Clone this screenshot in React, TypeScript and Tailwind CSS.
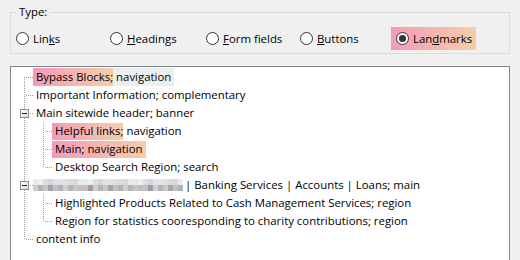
type Cell = 'first' | 'tee' | 'last' | 'pipe' | 'expand'

const line = '#a0a0a0'

function Gutter({ kind }: { kind: Cell }) {
  return (
    <svg width="19" height="18" className="shrink-0" shapeRendering="crispEdges">
      {kind === 'pipe' && <line x1="10.5" y1="0" x2="10.5" y2="18" stroke={line} strokeDasharray="1 1" />}
      {kind === 'tee' && <line x1="10.5" y1="0" x2="10.5" y2="18" stroke={line} strokeDasharray="1 1" />}
      {kind === 'last' && <line x1="10.5" y1="0" x2="10.5" y2="10" stroke={line} strokeDasharray="1 1" />}
      {kind === 'first' && <line x1="10.5" y1="9" x2="10.5" y2="18" stroke={line} strokeDasharray="1 1" />}
      {kind !== 'pipe' && kind !== 'expand' && (
        <line x1="12" y1="9.5" x2="19" y2="9.5" stroke={line} strokeDasharray="1 1" />
      )}
      {kind === 'expand' && (
        <>
          <line x1="10.5" y1="0" x2="10.5" y2="5" stroke={line} strokeDasharray="1 1" />
          <line x1="10.5" y1="14" x2="10.5" y2="18" stroke={line} strokeDasharray="1 1" />
          <line x1="16" y1="9.5" x2="19" y2="9.5" stroke={line} strokeDasharray="1 1" />
          <defs>
            <linearGradient id="exp" x1="0" y1="0" x2="1" y2="1">
              <stop offset="0" stopColor="#ffffff" />
              <stop offset="1" stopColor="#d8d8d8" />
            </linearGradient>
          </defs>
          <rect x="6.5" y="5.5" width="8" height="8" fill="url(#exp)" stroke="#919191" />
          <line x1="8" y1="9.5" x2="13" y2="9.5" stroke="#222" />
        </>
      )}
    </svg>
  )
}

function Row({ cells, children }: { cells: Cell[]; children: React.ReactNode }) {
  return (
    <div className="flex h-[18px] items-center whitespace-nowrap">
      {cells.map((c, i) => (
        <Gutter key={i} kind={c} />
      ))}
      <div className="flex h-[18px] items-center">{children}</div>
    </div>
  )
}

const hl = 'bg-gradient-to-r from-[#f39ab6] to-[#f5cea9]'

const mosaicTop = ['#eeeeee', '#e6e2e4', '#dcdcdc', '#e8e8ea', '#d6d4d8', '#e2dede', '#ebebeb', '#dcdfe2', '#e4e2e6', '#d9d7d9']
const mosaicBot = ['#c8c6c9', '#b9b3b8', '#cfcdd0', '#aeb4b9', '#c7bfc3', '#a8a3ab', '#c3c8cc', '#b8b1b6', '#d2cfd1', '#9f9aa3', '#bcc3c6', '#c9bcc0']

function Mosaic() {
  const n = 30
  return (
    <div className="flex h-[12px] w-[150px] flex-col">
      <div className="flex h-[6px]">
        {Array.from({ length: n }).map((_, i) => (
          <div key={i} className="h-full w-[5px]" style={{ background: mosaicTop[(i * 7 + 3) % mosaicTop.length] }} />
        ))}
      </div>
      <div className="flex h-[6px]">
        {Array.from({ length: n }).map((_, i) => (
          <div key={i} className="h-full w-[5px]" style={{ background: mosaicBot[(i * 5 + 2) % mosaicBot.length] }} />
        ))}
      </div>
    </div>
  )
}

function Radio({ checked }: { checked?: boolean }) {
  return (
    <span className="flex h-[13px] w-[13px] shrink-0 items-center justify-center rounded-full border border-[#333333] bg-white">
      {checked && <span className="h-[7px] w-[7px] rounded-full bg-[#333333]" />}
    </span>
  )
}

function Option({ w, checked, children }: { w: string; checked?: boolean; children: React.ReactNode }) {
  return (
    <div className={`flex h-[23px] items-center gap-[4px] ${w}`}>
      <Radio checked={checked} />
      <span>{children}</span>
    </div>
  )
}

export default function App() {
  return (
    <div
      className="h-[260px] w-[520px] overflow-hidden bg-[#f0f0f0] text-[11.4px] text-black"
      style={{ fontFamily: '"Open Sans", "Noto Sans", sans-serif' }}
    >
      <fieldset className="mx-[10px] mt-[4px] h-[50px] border border-[#dcdcdc]">
        <legend className="ml-[5px] px-[3px] leading-[16px]">Type:</legend>
        <div className="flex items-center pl-[5px] pt-[7px]">
          <Option w="w-[94px]">
            Lin<u>k</u>s
          </Option>
          <Option w="w-[96px]">
            <u>H</u>eadings
          </Option>
          <Option w="w-[94px]">
            <u>F</u>orm fields
          </Option>
          <Option w="w-[91px]">
            <u>B</u>uttons
          </Option>
          <div className={`flex h-[23px] w-[85px] items-center gap-[4px] pl-[5px] ${hl}`}>
            <Radio checked />
            <span>
              Lan<u>d</u>marks
            </span>
          </div>
        </div>
      </fieldset>

      <div className="mx-[10px] mt-[12px] h-[220px] border border-[#828790] bg-white pl-[3px] pt-[1px]">
        <Row cells={['first']}>
          <span className="flex h-[18px] items-center bg-[#eeeeee] pr-[3px]">
            <span className={`flex h-[18px] items-center pl-[3px] ${hl}`}>Bypass Blocks;</span>
            <span>&nbsp;navigation</span>
          </span>
        </Row>
        <Row cells={['tee']}>
          <span className="pl-[3px]">Important Information; complementary</span>
        </Row>
        <Row cells={['expand']}>
          <span className="pl-[3px]">Main sitewide header; banner</span>
        </Row>
        <Row cells={['pipe', 'tee']}>
          <span className={`flex h-[17px] items-center pl-[3px] ${hl}`}>Helpful links;</span>
          <span>&nbsp;navigation</span>
        </Row>
        <Row cells={['pipe', 'tee']}>
          <span className={`flex h-[17px] items-center px-[3px] ${hl}`}>Main; navigation</span>
        </Row>
        <Row cells={['pipe', 'last']}>
          <span className="pl-[3px]">Desktop Search Region; search</span>
        </Row>
        <Row cells={['expand']}>
          <Mosaic />
          <span className="pl-[2px]">| Banking Services | Accounts | Loans; main</span>
        </Row>
        <Row cells={['pipe', 'tee']}>
          <span className="pl-[3px]">Highlighted Products Related to Cash Management Services; region</span>
        </Row>
        <Row cells={['pipe', 'last']}>
          <span className="pl-[3px]">Region for statistics cooresponding to charity contributions; region</span>
        </Row>
        <Row cells={['last']}>
          <span className="pl-[3px]">content info</span>
        </Row>
      </div>
    </div>
  )
}
